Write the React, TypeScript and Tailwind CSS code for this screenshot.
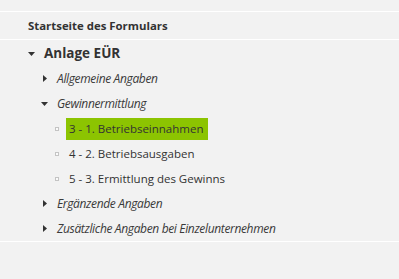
const font = { fontFamily: '"Open Sans", "Liberation Sans", sans-serif' };

function Caret({ open }: { open: boolean }) {
  return open ? (
    <svg width="7" height="4" viewBox="0 0 7 4" className="shrink-0 text-[#333]">
      <path d="M0 0h7L3.5 4z" fill="currentColor" />
    </svg>
  ) : (
    <svg width="4" height="7" viewBox="0 0 4 7" className="shrink-0 text-[#333]">
      <path d="M0 0v7L4 3.5z" fill="currentColor" />
    </svg>
  );
}

function Bullet() {
  return <span className="block w-[4px] h-[4px] border border-[#c4c4c4] bg-[#fafafa] shrink-0" />;
}

const groups = [
  { label: "Allgemeine Angaben", open: false },
  { label: "Gewinnermittlung", open: true },
];

const pages = [
  { label: "3 - 1. Betriebseinnahmen", active: true },
  { label: "4 - 2. Betriebsausgaben" },
  { label: "5 - 3. Ermittlung des Gewinns" },
];

function Group({ label, open }: { label: string; open: boolean }) {
  return (
    <li className={`h-[25px] flex items-center ${open ? "pl-[41px] gap-[9px]" : "pl-[43px] gap-[10px]"}`}>
      <Caret open={open} />
      <span className="italic text-[12px] tracking-[-0.35px] text-[#3a3a3a]">{label}</span>
    </li>
  );
}

export default function App() {
  return (
    <div style={font} className="w-[399px] h-[279px] bg-[#f2f2f2] text-[#333] pt-[11px]">
      <div className="border-t border-white h-[28px] flex items-center pl-[28px] font-bold text-[11.4px]">
        Startseite des Formulars
      </div>
      <ul className="border-t border-b border-white pt-px">
        <li className="h-[25px] flex items-center pl-[28px] gap-[9px] font-bold text-[13.5px]">
          <Caret open />
          <span>Anlage EÜR</span>
        </li>
        {groups.map((g) => (
          <Group key={g.label} label={g.label} open={g.open} />
        ))}
        {pages.map((p) => (
          <li key={p.label} className="h-[25px] flex items-center pl-[55px] gap-[7px] text-[11.5px]">
            <Bullet />
            <span className={p.active ? "bg-[#8cc401] pl-[3px] pr-[5px] h-[22px] flex items-center" : "pl-[3px]"}>{p.label}</span>
          </li>
        ))}
        <Group label="Ergänzende Angaben" open={false} />
        <Group label="Zusätzliche Angaben bei Einzelunternehmen" open={false} />
      </ul>
    </div>
  );
}
